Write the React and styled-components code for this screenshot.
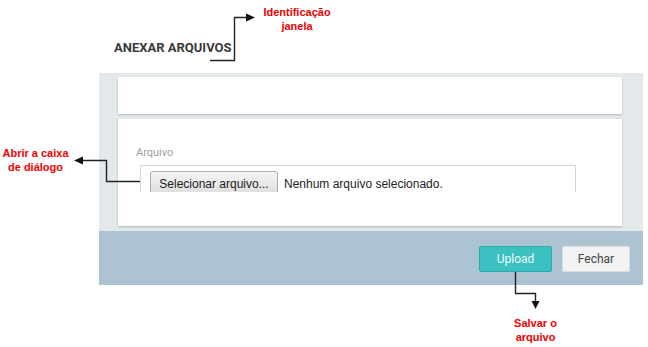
import React from "react";
import styled, { createGlobalStyle } from "styled-components";

const Global = createGlobalStyle`
  html, body { margin: 0; padding: 0; background: #ffffff; }
  body { font-family: Roboto, "Liberation Sans", Arial, sans-serif; }
`;

const Page = styled.div`
  position: relative;
  width: 648px;
  height: 347px;
  overflow: hidden;
`;

const Header = styled.header`
  padding: 40px 0 0 114px;
  height: 73px;
  box-sizing: border-box;
`;

const Title = styled.h1`
  margin: 0;
  font-family: Roboto, "Liberation Sans", Arial, sans-serif;
  font-weight: 700;
  font-size: 13px;
  line-height: 16px;
  color: #3a3a3a;
  letter-spacing: 0;
`;

const Panel = styled.section`
  margin-left: 99px;
  width: 544px;
`;

const Body = styled.div`
  background: #e3e8eb;
  padding: 4px 21px 5px 19px;
  display: flex;
  flex-direction: column;
  gap: 5px;
`;

const Card = styled.div`
  background: #ffffff;
  height: ${(p) => p.$h}px;
  box-shadow: 0 1px 2px rgba(0, 0, 0, 0.22);
  box-sizing: border-box;
  padding: ${(p) => p.$pad || "0"};
`;

const Label = styled.div`
  font-family: Roboto, "Liberation Sans", Arial, sans-serif;
  font-size: 11px;
  line-height: 13px;
  color: #a0a0a0;
  margin-bottom: 6px;
`;

const FileBox = styled.div`
  margin-left: 4px;
  width: 436px;
  height: 27px;
  box-sizing: border-box;
  border: 1px solid #d4d4d4;
  border-bottom: none;
  display: flex;
  align-items: flex-start;
  padding: 5px 0 0 9px;
  overflow: hidden;
`;

const FileButton = styled.div`
  height: 24px;
  width: 128px;
  box-sizing: border-box;
  padding-top: 5px;
  text-align: center;
  border: 1px solid #adadad;
  border-radius: 3px;
  background: linear-gradient(#f4f4f4, #dedede);
  font-family: "Liberation Sans", Arial, sans-serif;
  font-size: 12px;
  line-height: 15px;
  color: #222;
  white-space: nowrap;
`;

const FileText = styled.span`
  margin-left: 6px;
  padding-top: 6px;
  font-family: "Liberation Sans", Arial, sans-serif;
  font-size: 12px;
  line-height: 15px;
  color: #222;
  white-space: nowrap;
`;

const Footer = styled.div`
  background: #acc4d1;
  height: 54px;
  display: flex;
  justify-content: flex-end;
  align-items: flex-start;
  padding: 15px 13px 0 0;
  gap: 10px;
  box-sizing: border-box;
`;

const Button = styled.button`
  height: 26px;
  width: ${(p) => p.$w}px;
  box-sizing: border-box;
  border-radius: 2px;
  border: 1px solid ${(p) => (p.$primary ? "#2fa9a9" : "#dcdcdc")};
  background: ${(p) => (p.$primary ? "#3cc1c2" : "#f2f2f2")};
  color: ${(p) => (p.$primary ? "#eefafa" : "#444")};
  font-family: Roboto, "Liberation Sans", Arial, sans-serif;
  font-size: 12px;
  padding: 0;
  cursor: pointer;
`;

const Note = styled.div`
  position: absolute;
  left: ${(p) => p.$x}px;
  top: ${(p) => p.$y}px;
  width: ${(p) => p.$w}px;
  text-align: center;
  font-family: "Liberation Sans", Arial, sans-serif;
  font-weight: 700;
  font-size: 11px;
  line-height: 14px;
  color: #ee0000;
`;

const Overlay = styled.svg`
  position: absolute;
  left: 0;
  top: 0;
  pointer-events: none;
`;

export default function App() {
  return (
    <>
      <Global />
      <Page>
        <Header>
          <Title>ANEXAR ARQUIVOS</Title>
        </Header>
        <Panel>
          <Body>
            <Card $h={37} />
            <Card $h={107} $pad="27px 0 0 18px">
              <Label>Arquivo</Label>
              <FileBox>
                <FileButton>Selecionar arquivo...</FileButton>
                <FileText>Nenhum arquivo selecionado.</FileText>
              </FileBox>
            </Card>
          </Body>
          <Footer>
            <Button $primary $w={73}>Upload</Button>
            <Button $w={68}>Fechar</Button>
          </Footer>
        </Panel>

        <Overlay width="648" height="347" viewBox="0 0 648 347">
          <g fill="none" stroke="#222" strokeWidth="1.4">
            <polyline points="210,60.5 234.5,60.5 234.5,17.5 247,17.5" />
            <polyline points="140,181.5 106.5,181.5 106.5,160.5 82,160.5" />
            <polyline points="515.5,272 515.5,293.5 535.5,293.5 535.5,302" />
          </g>
          <g fill="#111">
            <polygon points="246,13.5 255,17.5 246,21.5" />
            <polygon points="83,156.5 74,160.5 83,164.5" />
            <polygon points="531.5,301 539.5,301 535.5,309" />
          </g>
        </Overlay>
        <Note $x={258} $y={5} $w={78}>Identificação<br />janela</Note>
        <Note $x={0} $y={146} $w={71}>Abrir a caixa<br />de diálogo</Note>
        <Note $x={500} $y={316} $w={71}>Salvar o<br />arquivo</Note>
      </Page>
    </>
  );
}
